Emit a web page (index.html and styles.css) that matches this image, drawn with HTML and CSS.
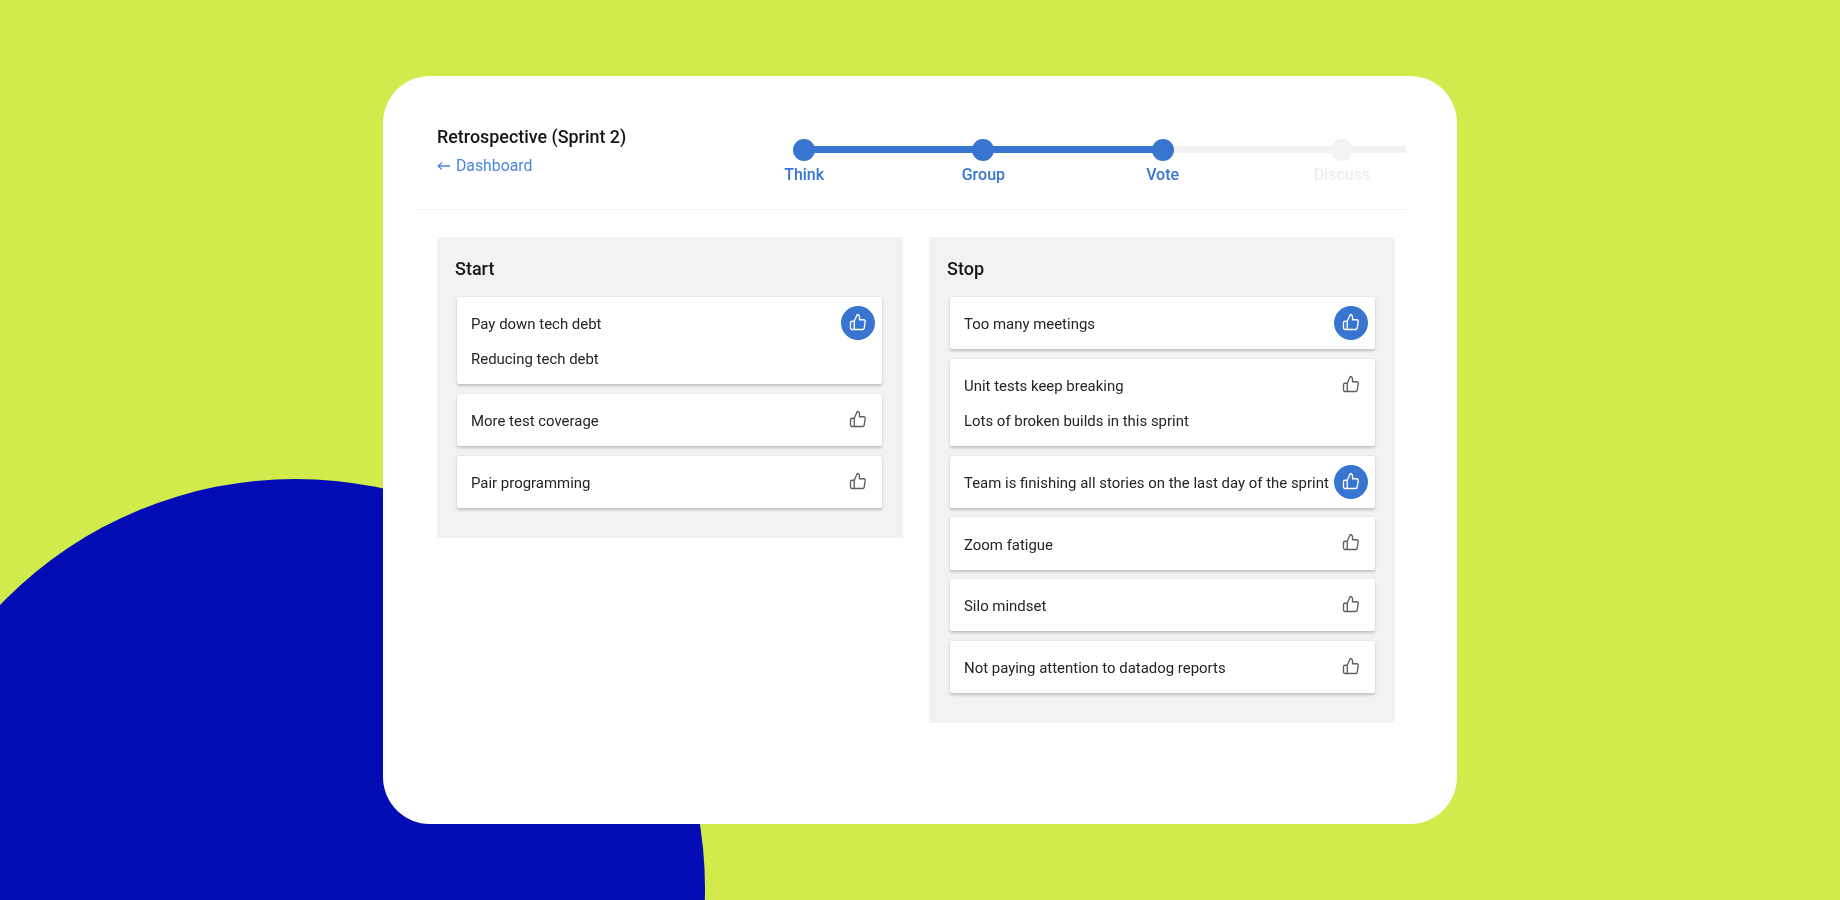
FILE: index.html
```html
<!DOCTYPE html>
<html lang="en">
<head>
<meta charset="utf-8">
<title>Retrospective (Sprint 2)</title>
<link rel="stylesheet" href="styles.css">
</head>
<body>
<div class="stage">
  <div class="blob"></div>
  <main class="board">
    <header class="head">
      <div class="head-left">
        <h1 class="title">Retrospective (Sprint 2)</h1>
        <a class="back"><svg class="back-arrow" viewBox="0 0 13 10"><path d="M13 5H1.2M5 1.4 1.2 5 5 8.6"/></svg>Dashboard</a>
      </div>
      <ol class="steps">
        <li class="step on line-on"><span class="dot"></span><span class="label">Think</span></li>
        <li class="step on line-on"><span class="dot"></span><span class="label">Group</span></li>
        <li class="step on"><span class="dot"></span><span class="label">Vote</span></li>
        <li class="step last"><span class="dot"></span><span class="label">Discuss</span></li>
      </ol>
    </header>
    <div class="columns">
      <section class="panel">
        <h2 class="panel-title">Start</h2>
        <div class="items">
          <article class="item">
            <div class="text"><p>Pay down tech debt</p><p class="sub">Reducing tech debt</p></div>
            <button class="like voted"><svg viewBox="0 0 24 24"><path d="M14 9V5a3 3 0 0 0-3-3l-4 9v11h11.28a2 2 0 0 0 2-1.7l1.38-9a2 2 0 0 0-2-2.3zM7 22H4a2 2 0 0 1-2-2v-7a2 2 0 0 1 2-2h3"/></svg></button>
          </article>
          <article class="item">
            <div class="text"><p>More test coverage</p></div>
            <button class="like"><svg viewBox="0 0 24 24"><path d="M14 9V5a3 3 0 0 0-3-3l-4 9v11h11.28a2 2 0 0 0 2-1.7l1.38-9a2 2 0 0 0-2-2.3zM7 22H4a2 2 0 0 1-2-2v-7a2 2 0 0 1 2-2h3"/></svg></button>
          </article>
          <article class="item">
            <div class="text"><p>Pair programming</p></div>
            <button class="like"><svg viewBox="0 0 24 24"><path d="M14 9V5a3 3 0 0 0-3-3l-4 9v11h11.28a2 2 0 0 0 2-1.7l1.38-9a2 2 0 0 0-2-2.3zM7 22H4a2 2 0 0 1-2-2v-7a2 2 0 0 1 2-2h3"/></svg></button>
          </article>
        </div>
      </section>
      <section class="panel panel-stop">
        <h2 class="panel-title">Stop</h2>
        <div class="items">
          <article class="item">
            <div class="text"><p>Too many meetings</p></div>
            <button class="like voted"><svg viewBox="0 0 24 24"><path d="M14 9V5a3 3 0 0 0-3-3l-4 9v11h11.28a2 2 0 0 0 2-1.7l1.38-9a2 2 0 0 0-2-2.3zM7 22H4a2 2 0 0 1-2-2v-7a2 2 0 0 1 2-2h3"/></svg></button>
          </article>
          <article class="item">
            <div class="text"><p>Unit tests keep breaking</p><p class="sub">Lots of broken builds in this sprint</p></div>
            <button class="like"><svg viewBox="0 0 24 24"><path d="M14 9V5a3 3 0 0 0-3-3l-4 9v11h11.28a2 2 0 0 0 2-1.7l1.38-9a2 2 0 0 0-2-2.3zM7 22H4a2 2 0 0 1-2-2v-7a2 2 0 0 1 2-2h3"/></svg></button>
          </article>
          <article class="item">
            <div class="text"><p>Team is finishing all stories on the last day of the sprint</p></div>
            <button class="like voted"><svg viewBox="0 0 24 24"><path d="M14 9V5a3 3 0 0 0-3-3l-4 9v11h11.28a2 2 0 0 0 2-1.7l1.38-9a2 2 0 0 0-2-2.3zM7 22H4a2 2 0 0 1-2-2v-7a2 2 0 0 1 2-2h3"/></svg></button>
          </article>
          <article class="item">
            <div class="text"><p>Zoom fatigue</p></div>
            <button class="like"><svg viewBox="0 0 24 24"><path d="M14 9V5a3 3 0 0 0-3-3l-4 9v11h11.28a2 2 0 0 0 2-1.7l1.38-9a2 2 0 0 0-2-2.3zM7 22H4a2 2 0 0 1-2-2v-7a2 2 0 0 1 2-2h3"/></svg></button>
          </article>
          <article class="item">
            <div class="text"><p>Silo mindset</p></div>
            <button class="like"><svg viewBox="0 0 24 24"><path d="M14 9V5a3 3 0 0 0-3-3l-4 9v11h11.28a2 2 0 0 0 2-1.7l1.38-9a2 2 0 0 0-2-2.3zM7 22H4a2 2 0 0 1-2-2v-7a2 2 0 0 1 2-2h3"/></svg></button>
          </article>
          <article class="item">
            <div class="text"><p>Not paying attention to datadog reports</p></div>
            <button class="like"><svg viewBox="0 0 24 24"><path d="M14 9V5a3 3 0 0 0-3-3l-4 9v11h11.28a2 2 0 0 0 2-1.7l1.38-9a2 2 0 0 0-2-2.3zM7 22H4a2 2 0 0 1-2-2v-7a2 2 0 0 1 2-2h3"/></svg></button>
          </article>
        </div>
      </section>
    </div>
  </main>
</div>
</body>
</html>
```

FILE: styles.css
```css
* { box-sizing: border-box; }
html, body { margin: 0; padding: 0; }
body { font-family: Roboto, "Liberation Sans", sans-serif; color: #201f1e; }

.stage {
  position: relative;
  width: 1840px;
  height: 900px;
  overflow: hidden;
  background: #d0eb4b;
  padding: 76px 0 0 383px;
}
.blob {
  position: absolute;
  left: -114px;
  top: 479px;
  width: 819px;
  height: 819px;
  border-radius: 50%;
  background: #040db5;
}
.board {
  position: relative;
  width: 1074px;
  height: 748px;
  background: #fff;
  border-radius: 47px;
  padding: 47px 51px 0 34px;
}

.head {
  display: flex;
  height: 87px;
  border-bottom: 1px solid #f3f2f1;
  filter: blur(.3px);
}
.head-left { padding-left: 20px; width: 297.5px; }
.title {
  margin: 0;
  padding-top: 1px;
  font-size: 17.9px;
  line-height: 26px;
  font-weight: 500;
  color: #161514;
}
.back {
  display: flex;
  align-items: center;
  margin-top: 5px;
  font-size: 15.8px;
  line-height: 22px;
  color: #4a86e0;
}
.back-arrow {
  width: 13px;
  height: 10px;
  margin-right: 6px;
  fill: none;
  stroke: #4a86e0;
  stroke-width: 1.3;
}

.steps {
  display: flex;
  list-style: none;
  margin: 16px 0 0;
  padding: 0;
  width: 691.5px;
  overflow: hidden;
}
.step {
  position: relative;
  flex: 0 0 179.25px;
  display: flex;
  flex-direction: column;
  align-items: center;
  color: #eeedec;
}
.step::after {
  content: "";
  position: absolute;
  left: 50%;
  top: 7px;
  width: 100%;
  height: 7px;
  background: #f3f2f1;
}
.step.line-on::after { background: #3875d0; }
.dot {
  position: relative;
  z-index: 1;
  width: 22px;
  height: 22px;
  border-radius: 50%;
  background: #f3f2f1;
}
.label {
  margin-top: 4px;
  font-size: 16px;
  line-height: 20px;
  font-weight: 500;
}
.step.on { color: #3875d0; }
.step.on .dot { background: #3875d0; }

.columns {
  display: flex;
  align-items: flex-start;
  gap: 26px;
  margin-top: 27px;
  padding-left: 20px;
  filter: blur(.3px);
}
.panel {
  flex: 0 0 466px;
  background: #f3f2f1;
  padding: 20px 21px 30px 18px;
}
.panel-stop { padding-right: 20px; }
.panel-title {
  margin: 0 0 16px;
  font-size: 18px;
  line-height: 24px;
  font-weight: 500;
  color: #161514;
}
.items {
  display: flex;
  flex-direction: column;
  gap: 9.5px;
  margin-left: 2px;
}
.panel-stop .items { margin-left: 3px; }
.item {
  display: flex;
  align-items: flex-start;
  background: #fff;
  border-radius: 2px;
  padding: 9px 7px 0 14px;
  box-shadow: 0 1.5px 3px rgba(0, 0, 0, .2), 0 0 1px rgba(0, 0, 0, .06);
}
.text {
  flex: 1;
  padding: 8.2px 0 15.1px;
  font-size: 14.95px;
  line-height: 20px;
  color: #252423;
}
.text p { margin: 0; white-space: nowrap; }
.text .sub { margin-top: 15px; }
.like {
  flex: 0 0 34px;
  width: 34px;
  height: 34px;
  margin: 0;
  padding: 0;
  border: 0;
  border-radius: 50%;
  background: transparent;
  display: flex;
  align-items: center;
  justify-content: center;
}
.like svg {
  width: 18px;
  height: 18px;
  margin-bottom: 2px;
  fill: none;
  stroke: #605e5c;
  stroke-width: 1.8;
  stroke-linejoin: round;
  stroke-linecap: round;
}
.like.voted { background: #3875d0; }
.like.voted svg { stroke: #fff; }
```
